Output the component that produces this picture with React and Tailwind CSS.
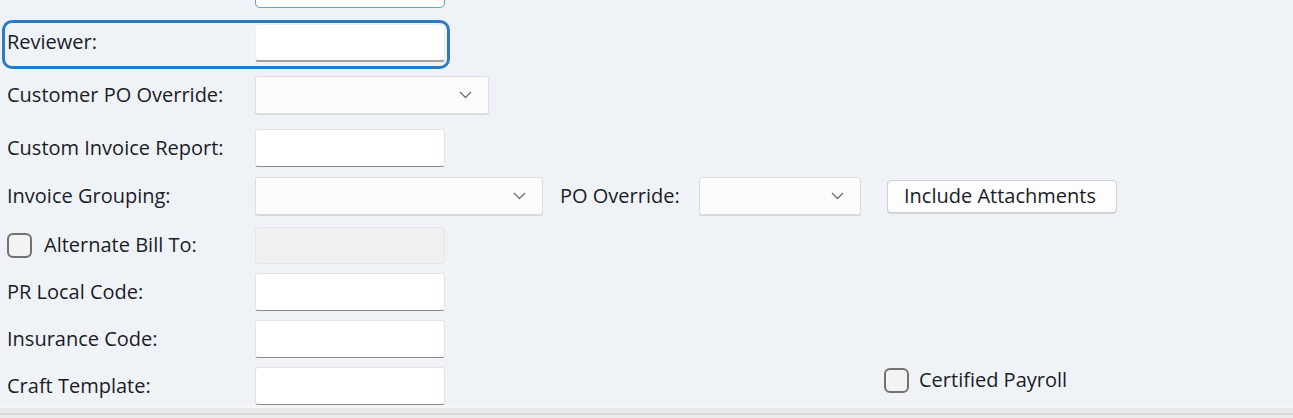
import React from "react";

const font = { fontFamily: '"Open Sans", "Noto Sans", sans-serif' };

function Chevron() {
  return (
    <svg width="13" height="8" viewBox="0 0 13 8" fill="none" className="shrink-0">
      <polyline points="1,1 6.5,6.5 12,1" stroke="#6f6f6f" strokeWidth="1.3" fill="none" />
    </svg>
  );
}

function TextInput({ disabled }) {
  return disabled ? (
    <div className="h-[37px] w-[190px] rounded-[3px] border border-[#e6e6e6] bg-[#f0f0f0]" />
  ) : (
    <div className="h-[38px] w-[190px] rounded-[3px] border border-[#e4e4e4] border-b-[#8a8a8a] bg-white" />
  );
}

function Select({ w, chevronPad = "pr-[16px]" }) {
  return (
    <div
      className={`h-[38px] ${w} rounded-[3px] border border-[#dedede] bg-[#fcfcfc] flex items-center justify-end ${chevronPad} shadow-[0_1px_0_#d8d8d8]`}
    >
      <Chevron />
    </div>
  );
}

function Checkbox() {
  return <div className="h-[25px] w-[25px] rounded-[6px] border-[2.5px] border-[#727272] bg-[#f3f3f3] shrink-0" />;
}

function Label({ children }) {
  return <div className="w-[255px] shrink-0 pl-[7px] text-[20px] text-[#1b1b28]">{children}</div>;
}

export default function App() {
  return (
    <div className="w-[1293px] h-[418px] overflow-hidden bg-[#eff3f7] flex flex-col" style={font}>
      {/* partial top field */}
      <div className="h-[8px] shrink-0 relative">
        <div className="ml-[255px] -mt-[12px] h-[20px] w-[190px] rounded-[5px] border-[1.5px] border-[#5fa2dc] bg-white" />
      </div>

      {/* Reviewer (focused row) */}
      <div className="mt-[12px] ml-[2px] h-[49px] w-[448px] shrink-0 rounded-[10px] border-[3px] border-[#2a7cc7] flex items-start">
        <div className="w-[250px] shrink-0 pl-[2px] pt-[4px] text-[20px] text-[#1b1b28]">Reviewer:</div>
        <div className="mt-[1px] h-[38px] w-[190px] rounded-[3px] border border-[#eeeeee] border-b-[2px] border-b-[#a0a0a0] bg-white" />
      </div>

      {/* Customer PO Override */}
      <div className="mt-[7px] flex items-center h-[38px] shrink-0">
        <Label>Customer PO Override:</Label>
        <Select w="w-[234px]" />
      </div>

      {/* Custom Invoice Report */}
      <div className="mt-[15px] flex items-center h-[38px] shrink-0">
        <Label>Custom Invoice Report:</Label>
        <TextInput />
      </div>

      {/* Invoice Grouping */}
      <div className="mt-[10px] flex items-center h-[38px] shrink-0">
        <Label>Invoice Grouping:</Label>
        <Select w="w-[288px]" />
        <div className="ml-[17px] w-[139px] shrink-0 text-[20px] text-[#1b1b28]">PO Override:</div>
        <Select w="w-[162px]" />
        <button className="ml-[26px] h-[33px] w-[230px] rounded-[4px] border border-[#cfcfcf] bg-[#fdfdfd] pr-[4px] text-[20px] text-[#1b1b28] shadow-[0_1px_0_#d6d6d6] leading-none">
          Include Attachments
        </button>
      </div>

      {/* Alternate Bill To */}
      <div className="mt-[11px] flex items-center h-[38px] shrink-0">
        <div className="w-[255px] shrink-0 pl-[7px] flex items-center gap-[12px] text-[20px] text-[#1b1b28]">
          <Checkbox />
          <span>Alternate Bill To:</span>
        </div>
        <TextInput disabled />
      </div>

      {/* PR Local Code */}
      <div className="mt-[9px] flex items-center h-[38px] shrink-0">
        <Label>PR Local Code:</Label>
        <TextInput />
      </div>

      {/* Insurance Code */}
      <div className="mt-[9px] flex items-center h-[38px] shrink-0">
        <Label>Insurance Code:</Label>
        <TextInput />
      </div>

      {/* Craft Template */}
      <div className="mt-[9px] flex items-center h-[38px] shrink-0">
        <Label>Craft Template:</Label>
        <TextInput />
        <div className="ml-[439px] -mt-[12px] flex items-center gap-[10px] text-[20px] text-[#1b1b28]">
          <Checkbox />
          <span>Certified Payroll</span>
        </div>
      </div>

      {/* bottom strip */}
      <div className="h-[3px] shrink-0 bg-[#f4f6f8]" />
      <div className="h-[5px] shrink-0 bg-[#e8e8e8]" />
      <div className="h-[2px] shrink-0 bg-[#dcdcdc]" />
      <div className="flex-1 bg-[#ececec]" />
    </div>
  );
}
